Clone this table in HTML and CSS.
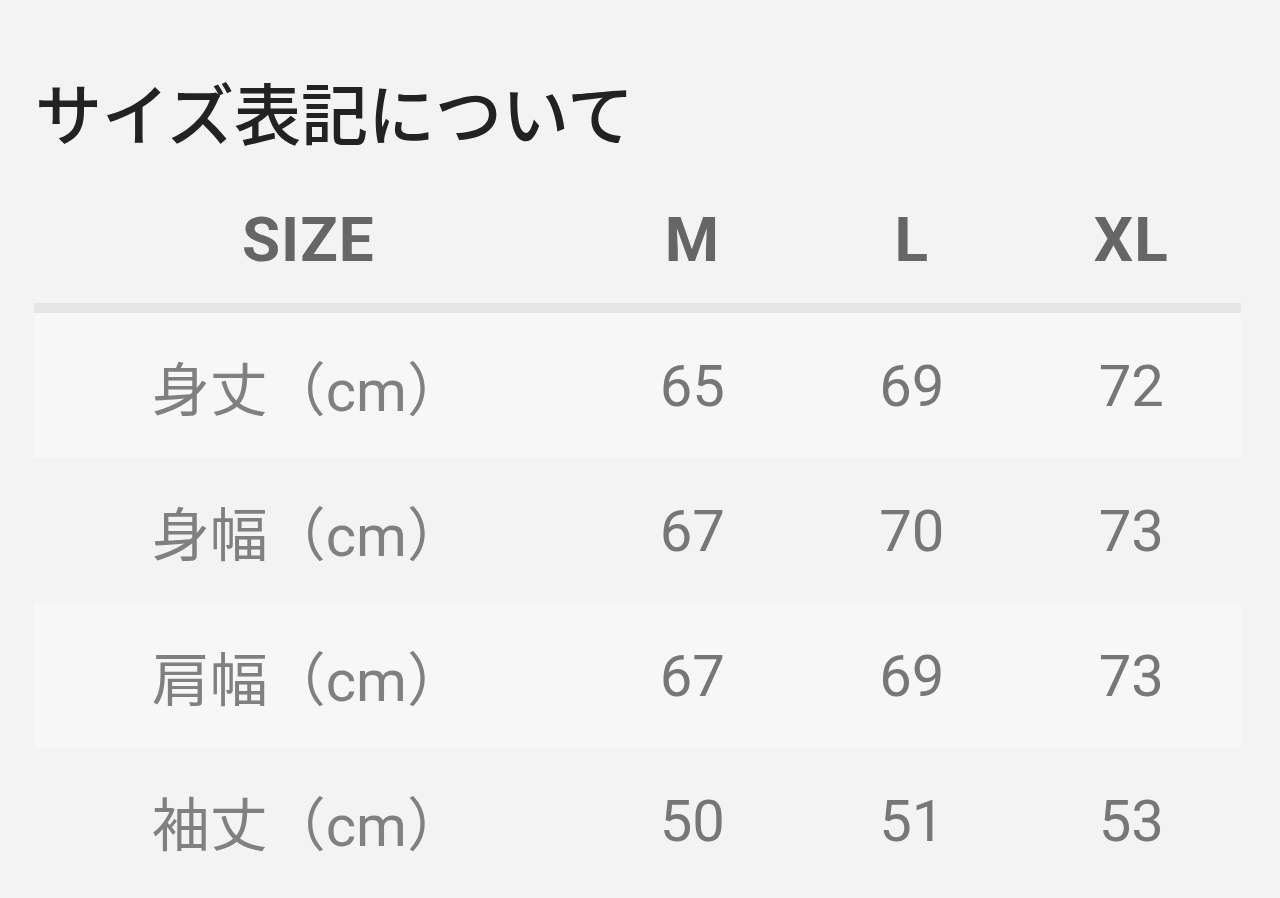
FILE: index.html
```html
<!DOCTYPE html>
<html lang="ja">
<head>
<meta charset="utf-8">
<link rel="stylesheet" href="styles.css">
</head>
<body>
<div class="page">
  <h2 class="title">サイズ表記について</h2>
  <div class="table">
    <div class="row head">
      <div class="cell">SIZE</div>
      <div class="cell">M</div>
      <div class="cell">L</div>
      <div class="cell">XL</div>
    </div>
    <div class="row stripe">
      <div class="cell label">身丈（cm）</div>
      <div class="cell">65</div>
      <div class="cell">69</div>
      <div class="cell">72</div>
    </div>
    <div class="row">
      <div class="cell label">身幅（cm）</div>
      <div class="cell">67</div>
      <div class="cell">70</div>
      <div class="cell">73</div>
    </div>
    <div class="row stripe">
      <div class="cell label">肩幅（cm）</div>
      <div class="cell">67</div>
      <div class="cell">69</div>
      <div class="cell">73</div>
    </div>
    <div class="row">
      <div class="cell label">袖丈（cm）</div>
      <div class="cell">50</div>
      <div class="cell">51</div>
      <div class="cell">53</div>
    </div>
  </div>
</div>
</body>
</html>
```
FILE: styles.css
```css
html, body {
  margin: 0;
  padding: 0;
  background: #f3f3f3;
}
body {
  font-family: Roboto, "Noto Sans CJK JP", sans-serif;
  overflow: hidden;
  height: 898px;
}
.page {
  padding: 63px 39px 0 34px;
}
.title {
  margin: 0 0 17px 1px;
  font-size: 67px;
  line-height: 96px;
  font-weight: 500;
  color: #222;
  font-family: "Noto Sans CJK JP", sans-serif;
}
.table {
  width: 1207px;
}
.row {
  display: grid;
  grid-template-columns: 5fr 2fr 2fr 2fr;
  height: 145px;
  align-items: center;
}
.row.head {
  height: 127px;
  border-bottom: 10px solid #e6e6e6;
}
.row.stripe {
  background: #f7f7f7;
}
.cell {
  text-align: center;
  font-size: 58px;
  color: #777;
  white-space: nowrap;
}
.head .cell {
  font-weight: 700;
  font-size: 62px;
  color: #666;
  letter-spacing: 1px;
}
.label {
  color: #808080;
}
```
